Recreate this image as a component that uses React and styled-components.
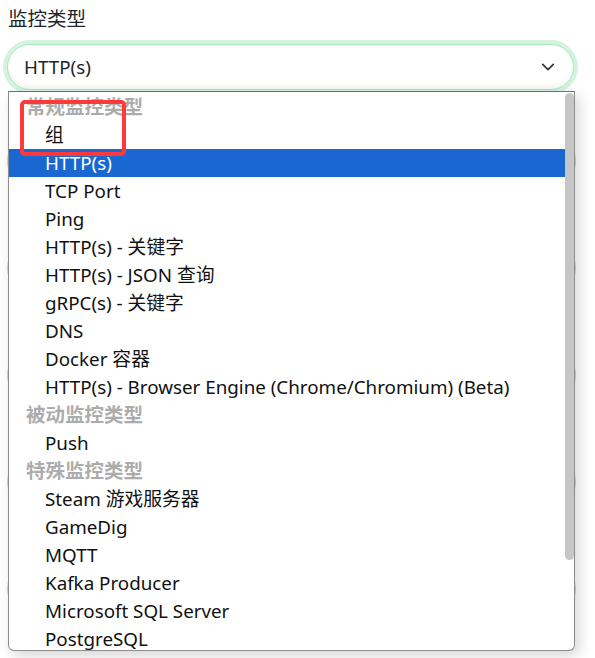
import React from "react";
import styled, { createGlobalStyle } from "styled-components";

const GlobalStyle = createGlobalStyle`
  html, body {
    margin: 0;
    padding: 0;
    background: #fff;
  }
  body {
    font-family: "Noto Sans", "Noto Sans CJK SC", sans-serif;
    color: #212529;
  }
`;

const Page = styled.div`
  position: relative;
  width: 595px;
  height: 658px;
  overflow: hidden;
  padding: 5px 0 0 0;
  box-sizing: border-box;
`;

const Label = styled.div`
  margin-left: 8px;
  font-size: 19.5px;
  line-height: 28px;
  color: #212529;
`;

const Field = styled.div`
  position: relative;
  margin: 11px 21px 0 7px;
`;

const Select = styled.div`
  height: 46px;
  box-sizing: border-box;
  display: flex;
  align-items: center;
  justify-content: space-between;
  padding: 0 18px 0 16px;
  border: 1px solid #a8e8bf;
  border-radius: 23px;
  background: #fff;
  box-shadow: 0 0 0 4px #d3f3df, inset 0 -6px 8px -6px rgba(0, 0, 0, 0.08);
  font-size: 18.8px;
`;

const BackInput = styled.div`
  height: 40px;
  margin: 0 19px 65px 7px;
  border: 1px solid #ced4da;
  border-radius: 20px;
`;

const BackForm = styled.div`
  padding-top: 50px;
`;

const Dropdown = styled.div`
  position: absolute;
  top: 91px;
  left: 8px;
  width: 567px;
  height: 560px;
  box-sizing: border-box;
  background: #fff;
  border: 1px solid #8d8d8d;
  border-top-color: #6f6f6f;
  border-radius: 0 0 6px 6px;
  box-shadow: 4px 5px 14px rgba(0, 0, 0, 0.16);
  display: flex;
  overflow: hidden;
`;

const List = styled.div`
  flex: 1;
  display: flex;
  flex-direction: column;
  position: relative;
  padding-top: 1px;
`;

const Group = styled.div`
  height: 28px;
  flex: none;
  line-height: 28px;
  padding-left: 17px;
  font-size: 19.5px;
  font-weight: 700;
  color: #acacac;
`;

const Option = styled.div`
  height: 28px;
  flex: none;
  line-height: 28px;
  padding-left: 36px;
  font-size: 18.8px;
  color: ${(p) => (p.$selected ? "#fff" : "#111")};
  background: ${(p) => (p.$selected ? "#1a67d2" : "transparent")};
  white-space: nowrap;
`;

const Track = styled.div`
  width: 9px;
  padding: 1px 0;
  display: flex;
  flex-direction: column;
`;

const Thumb = styled.div`
  height: 467px;
  background: #c6c6c6;
  border-radius: 5px;
`;

const Annotation = styled.div`
  position: absolute;
  left: 11px;
  top: 8px;
  width: 106px;
  height: 56px;
  box-sizing: border-box;
  border: 4px solid #ff3838;
  border-radius: 5px;
`;

const Chevron = () => (
  <svg width="14" height="14" viewBox="0 0 16 16" fill="none">
    <path
      d="M2 5l6 6 6-6"
      stroke="#343a40"
      strokeWidth="2"
      strokeLinecap="round"
      strokeLinejoin="round"
    />
  </svg>
);

const groups = [
  {
    title: "常规监控类型",
    items: [
      "组",
      "HTTP(s)",
      "TCP Port",
      "Ping",
      "HTTP(s) - 关键字",
      "HTTP(s) - JSON 查询",
      "gRPC(s) - 关键字",
      "DNS",
      "Docker 容器",
      "HTTP(s) - Browser Engine (Chrome/Chromium) (Beta)",
    ],
  },
  { title: "被动监控类型", items: ["Push"] },
  {
    title: "特殊监控类型",
    items: [
      "Steam 游戏服务器",
      "GameDig",
      "MQTT",
      "Kafka Producer",
      "Microsoft SQL Server",
      "PostgreSQL",
    ],
  },
];

export default function App() {
  return (
    <>
      <GlobalStyle />
      <Page>
        <Label>监控类型</Label>
        <Field>
          <Select>
            <span>HTTP(s)</span>
            <Chevron />
          </Select>
        </Field>
        <BackForm>
          <BackInput />
          <BackInput />
          <BackInput />
          <BackInput />
          <BackInput />
        </BackForm>
        <Dropdown>
          <List>
            {groups.map((g) => (
              <React.Fragment key={g.title}>
                <Group>{g.title}</Group>
                {g.items.map((item) => (
                  <Option key={item} $selected={item === "HTTP(s)"}>
                    {item}
                  </Option>
                ))}
              </React.Fragment>
            ))}
            <Annotation />
          </List>
          <Track>
            <Thumb />
          </Track>
        </Dropdown>
      </Page>
    </>
  );
}
